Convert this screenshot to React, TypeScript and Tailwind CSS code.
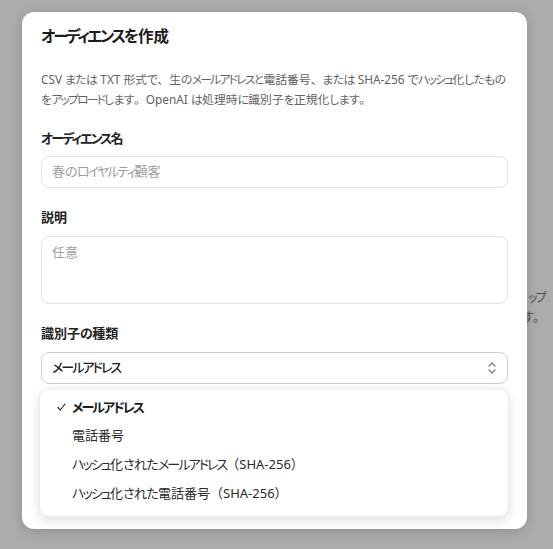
import React from "react";

const font = {
  fontFamily: '"Noto Sans", "Noto Sans CJK JP", sans-serif',
};

function J({ t }: { t: string }) {
  const parts = t.split(/([\u30A0-\u30FF]+|[\u3040-\u309F]+)/);
  return (
    <>
      {parts.map((p, i) => {
        if (!p) return null;
        if (/^[\u30A0-\u30FF]+$/.test(p)) {
          return (
            <span key={i} className="tracking-[-0.15em] [font-feature-settings:'palt']">
              {p}
            </span>
          );
        }
        if (/^[\u3040-\u309F]+$/.test(p)) {
          return (
            <span key={i} className="tracking-[-0.05em] [font-feature-settings:'palt']">
              {p}
            </span>
          );
        }
        return <span key={i}>{p}</span>;
      })}
    </>
  );
}

function ChevronsUpDown() {
  return (
    <svg width="10" height="14" viewBox="0 0 10 14" fill="none" stroke="#7a7a7a" strokeWidth="1.3" strokeLinecap="round" strokeLinejoin="round">
      <polyline points="2,5 5,2 8,5" />
      <polyline points="2,9 5,12 8,9" />
    </svg>
  );
}

function Check() {
  return (
    <svg width="9" height="8" viewBox="0 0 9 8" fill="none" stroke="#333" strokeWidth="1.2" strokeLinecap="round" strokeLinejoin="round">
      <polyline points="1,4.5 3.3,7 8,1" />
    </svg>
  );
}

export default function App() {
  const items = [
    "メールアドレス",
    "電話番号",
    "ハッシュ化されたメールアドレス（SHA-256）",
    "ハッシュ化された電話番号（SHA-256）",
  ];
  return (
    <div className="relative w-[553px] h-[549px] overflow-hidden bg-[#adadad] pt-[12px] pl-[22px]" style={font}>
      <div className="absolute left-[300px] top-[288px] w-[245px] text-right text-[12px] leading-[20px] text-[#4f4f4f]">
        <div className="whitespace-nowrap"><J t="ップ" /></div>
        <div className="whitespace-nowrap">す。</div>
      </div>
      <div className="relative z-10 w-[505px] h-[517px] rounded-[12px] bg-white px-[19px] pt-[14px] shadow-[0_2px_14px_rgba(0,0,0,0.18)]">
        <h2 className="text-[15.5px] font-bold leading-[20px] text-[#1c1c1c]"><J t="オーディエンスを作成" /></h2>
        <p className="mt-[23px] text-[11.8px] leading-[20px] text-[#626262]">
          <span className="block whitespace-nowrap"><J t="CSV または TXT 形式で、生のメールアドレスと電話番号、または SHA-256 でハッシュ化したもの" /></span>
          <span className="block whitespace-nowrap"><J t="をアップロードします。OpenAI は処理時に識別子を正規化します。" /></span>
        </p>
        <div className="mt-[19px] text-[13px] font-bold leading-[20px] text-[#222]"><J t="オーディエンス名" /></div>
        <div className="mt-[8px] flex h-[32px] items-center rounded-[8px] border border-[#e3e3e3] pl-[10px] text-[13px] text-[#9d9d9d]">
          <J t="春のロイヤルティ顧客" />
        </div>
        <div className="mt-[19px] text-[13px] font-bold leading-[20px] text-[#222]">説明</div>
        <div className="mt-[9px] h-[68px] rounded-[8px] border border-[#e3e3e3] pl-[10px] pt-[5px] text-[13px] leading-[20px] text-[#9d9d9d]">
          任意
        </div>
        <div className="mt-[19px] text-[13px] font-bold leading-[20px] text-[#222]"><J t="識別子の種類" /></div>
        <div className="mt-[9px] flex h-[32px] items-center justify-between rounded-[8px] border border-[#cdcdcd] pl-[10px] pr-[10px] text-[13px] font-medium text-[#1f1f1f]">
          <span><J t="メールアドレス" /></span>
          <ChevronsUpDown />
        </div>
        <div className="absolute left-[17px] top-[376px] z-20 w-[470px] rounded-[10px] border border-[#ececec] bg-white pt-[4px] pb-[8px] shadow-[0_4px_12px_rgba(0,0,0,0.12)]">
          {items.map((it, i) => (
            <div key={it} className="flex h-[28.7px] items-center text-[13px] text-[#2a2a2a]">
              <span className="flex w-[32px] justify-end pr-[6px]">{i === 0 ? <Check /> : null}</span>
              <span className={i === 0 ? "font-bold text-[#1c1c1c]" : ""}><J t={it} /></span>
            </div>
          ))}
        </div>
      </div>
    </div>
  );
}
